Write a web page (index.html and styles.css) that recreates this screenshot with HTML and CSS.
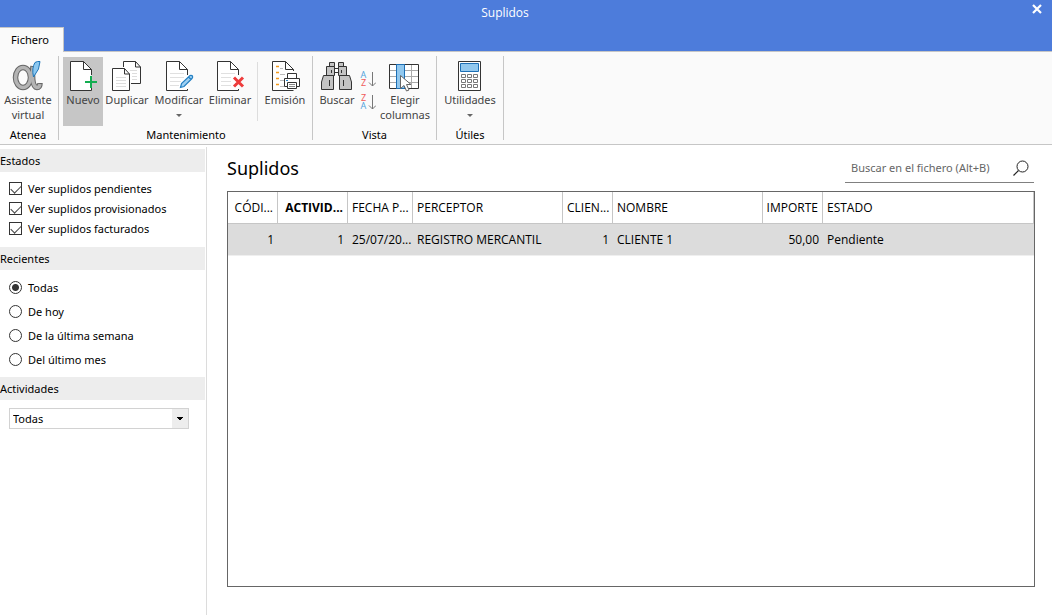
FILE: index.html
```html
<!DOCTYPE html>
<html lang="es">
<head>
<meta charset="utf-8">
<title>Suplidos</title>
<link rel="stylesheet" href="styles.css">
</head>
<body>
<div class="app">
  <header class="titlebar">
    <button class="tab" type="button">Fichero</button>
    <h1 class="window-title">Suplidos</h1>
    <button class="close" type="button" aria-label="Cerrar">
      <svg width="10" height="10" viewBox="0 0 10 10"><path d="M1 1L9 9M9 1L1 9" stroke="#fff" stroke-width="2.2"/></svg>
    </button>
  </header>

  <nav class="ribbon">
    <section class="group">
      <div class="tools">
        <button class="tool w56" type="button">
          <svg width="32" height="32" viewBox="0 0 32 32" fill="none">
            <g stroke="#666" stroke-width="5.500"><ellipse cx="11" cy="17.500" rx="7.500" ry="10"/><path d="M21 6C20 15 20 27 25 27.500Q28 27.500 28 23"/></g>
            <g stroke="#b4b4b4" stroke-width="3.500"><ellipse cx="11" cy="17.500" rx="7.500" ry="10"/><path d="M21 7C20 15 20 27 25 27.500Q27.500 27.500 28 24"/></g>
            <path d="M23 2.500Q25.500 1 28 1.500L26.500 9L21.500 17Q19.500 8 23 2.500Z" fill="#8cc8f0" stroke="#1d75b8"/>
          </svg>
          <span>Asistente<br>virtual</span>
        </button>
      </div>
      <div class="caption">Atenea</div>
    </section>

    <section class="group padded">
      <div class="tools">
        <button class="tool w40 active" type="button">
          <svg width="32" height="32" viewBox="0 0 32 32">
            <path d="M16.500 1.500H3.500V30.500H24.500V10L16.500 1.500Z" fill="#fff"/>
            <path d="M24.500 15V9.500L16.500 1.500H3.500V30.500H24.500V28M16.500 1.500V9.500H24.500" fill="none" stroke="#333"/>
            <path d="M24 16V28M18 22H30" stroke="#14ad51" stroke-width="2"/>
          </svg>
          <span>Nuevo</span>
        </button>
        <button class="tool w48" type="button">
          <svg width="32" height="32" viewBox="0 0 32 32">
            <path d="M12.500 7V1.500H24.500L29.500 7V23.500H20M24.500 1.500V7H29.500" fill="#fff" stroke="#333"/>
            <path d="M19 10.500H26M21 13.500H26M21 16.500H26M21 19.500H26" stroke="#ddd"/>
            <path d="M1.500 8.500H13.500L18.500 14V30.500H1.500ZM13.500 8.500V14H18.500" fill="#fff" stroke="#333"/>
            <path d="M5 17.500H15M5 20.500H15M5 23.500H15M5 26.500H15" stroke="#ddd"/>
          </svg>
          <span>Duplicar</span>
        </button>
        <button class="tool w56" type="button">
          <svg width="32" height="32" viewBox="0 0 32 32">
            <path d="M24.500 15V9.500L16.500 1.500H3.500V30.500H24.500V29M16.500 1.500V9.500H24.500" fill="#fff" stroke="#333"/>
            <path d="M7 13.500H21M7 17.500H21M7 21.500H18M7 25.500H16" stroke="#e0e0e0"/>
            <path d="M17.500 27.500L18.500 23.500L27 15.500Q28.500 15 29.500 16Q30 17.500 29 18.500L21 26.500ZM25.500 17L28 19.500" fill="#9fd0f2" stroke="#2580c3" stroke-width="1.200"/>
          </svg>
          <span>Modificar</span>
          <i class="arrow"></i>
        </button>
        <button class="tool w46" type="button">
          <svg width="32" height="32" viewBox="0 0 32 32">
            <path d="M24.500 15V9.500L16.500 1.500H3.500V30.500H24.500V29M16.500 1.500V9.500H24.500" fill="#fff" stroke="#333"/>
            <path d="M7 13.500H21M7 17.500H17M7 21.500H17M7 25.500H17" stroke="#e0e0e0"/>
            <path d="M20 17.500L29 26.500M29 17.500L20 26.500" stroke="#ee3c3c" stroke-width="3"/>
          </svg>
          <span>Eliminar</span>
        </button>
        <div class="divider"></div>
        <button class="tool w48" type="button">
          <svg width="32" height="32" viewBox="0 0 32 32">
            <path d="M24.500 11V9.500L16.500 1.500H3.500V30.500H24.500M16.500 1.500V9.500H24.500" fill="#fff" stroke="#333"/>
            <path d="M7 6.500H10M7 12.500H10M7 18.500H10M7 24.500H10" stroke="#f39a1e" stroke-width="1.500"/>
            <path d="M11 8.500H14M11 14.500H16M11 20.500H15M11 26.500H15" stroke="#bbb"/>
            <path d="M18.500 18V13.500H27.500V18M15.500 18.500H30.500V26.500H15.500Z" fill="#fff" stroke="#333"/>
            <path d="M18.500 22.500H27.500V28.500H18.500Z" fill="#fff" stroke="#333"/>
            <path d="M20 24.500H26M20 26.500H26" stroke="#888"/>
            <path d="M17 20.500H19" stroke="#2580c3"/>
          </svg>
          <span>Emisión</span>
        </button>
      </div>
      <div class="caption">Mantenimiento</div>
    </section>

    <section class="group vista">
      <div class="tools">
        <button class="tool w42" type="button">
          <svg width="32" height="32" viewBox="0 0 32 32">
            <g fill="#c4c4c4" stroke="#333">
              <path d="M8.500 2.500H13.500V6.500H8.500ZM17.500 2.500H22.500V6.500H17.500Z"/>
              <path d="M13.500 8.500H17.500V12.500H13.500Z" fill="#fff"/>
              <path d="M5.500 6.500H13.500V15.500H5.500ZM17.500 6.500H25.500V15.500H17.500Z"/>
              <path d="M2.500 15.500H12.500V29.500H.5V22ZM18.500 15.500H28.500L30.500 22V29.500H18.500Z"/>
              <path d="M10.500 10V13M20.500 10V13M8.500 20V26M22.500 20V26"/>
            </g>
          </svg>
          <span>Buscar</span>
        </button>
        <div class="sorts">
          <button class="sort" type="button" aria-label="Orden ascendente">
            <span class="letters"><b class="blue">A</b><b class="red">Z</b></span>
            <svg width="8" height="16" viewBox="0 0 8 16"><path d="M4.500 1V15M1 11.500L4.500 15L8 11.500" fill="none" stroke="#777"/></svg>
          </button>
          <button class="sort" type="button" aria-label="Orden descendente">
            <span class="letters"><b class="red">Z</b><b class="blue">A</b></span>
            <svg width="8" height="16" viewBox="0 0 8 16"><path d="M4.500 1V15M1 11.500L4.500 15L8 11.500" fill="none" stroke="#777"/></svg>
          </button>
        </div>
        <button class="tool w56" type="button">
          <svg width="32" height="32" viewBox="0 0 32 32">
            <path d="M.5 4.500H29.500V28.500H.5Z" fill="#fff"/>
            <path d="M1 10.500H29M1 16.500H29M1 22.500H29M22.500 5V28" stroke="#aaa"/>
            <path d="M.5 4.500H29.500V28.500H.5Z" fill="none" stroke="#333"/>
            <path d="M7.500 4.500H15.500V28.500H7.500Z" fill="#92c8ee" stroke="#1d6fb5"/>
            <path d="M11.500 15.500V28.500L15 25.500L17.500 31L20 30L17.500 24.500H22Z" fill="#fff" stroke="#666"/>
          </svg>
          <span>Elegir<br>columnas</span>
        </button>
      </div>
      <div class="caption">Vista</div>
    </section>

    <section class="group utiles">
      <div class="tools">
        <button class="tool w58" type="button">
          <svg width="32" height="32" viewBox="0 0 32 32">
            <path d="M4.500 1.500H26.500V30.500H4.500Z" fill="#fff" stroke="#333"/>
            <path d="M6.500 3.500H24.500V11.500H6.500Z" fill="#92c8ee" stroke="#1d6fb5"/>
            <path d="M7.500 14.500h4v3h-4zM13.500 14.500h4v3h-4zM19.500 14.500h4v3h-4zM7.500 19.500h4v3h-4zM13.500 19.500h4v3h-4zM19.500 19.500h4v3h-4zM7.500 24.500h4v3h-4zM13.500 24.500h4v3h-4zM19.500 24.500h4v3h-4z" fill="#fff" stroke="#777"/>
          </svg>
          <span>Utilidades</span>
          <i class="arrow"></i>
        </button>
      </div>
      <div class="caption">Útiles</div>
    </section>
  </nav>

  <div class="body">
    <aside class="sidebar">
      <h2 class="section">Estados</h2>
      <div class="checks">
        <label><input type="checkbox" checked>Ver suplidos pendientes</label>
        <label><input type="checkbox" checked>Ver suplidos provisionados</label>
        <label><input type="checkbox" checked>Ver suplidos facturados</label>
      </div>
      <h2 class="section">Recientes</h2>
      <div class="radios">
        <label><input type="radio" name="recientes" checked>Todas</label>
        <label><input type="radio" name="recientes">De hoy</label>
        <label><input type="radio" name="recientes">De la última semana</label>
        <label><input type="radio" name="recientes">Del último mes</label>
      </div>
      <h2 class="section">Actividades</h2>
      <div class="combo">
        <select aria-label="Actividades"><option>Todas</option></select>
      </div>
    </aside>

    <main class="main">
      <div class="heading">
        <h2 class="title">Suplidos</h2>
        <label class="search">
          <input type="text" placeholder="Buscar en el fichero (Alt+B)" aria-label="Buscar en el fichero">
          <svg width="16" height="16" viewBox="0 0 16 16" fill="none" stroke="#222"><circle cx="9.500" cy="6.500" r="5.500"/><path d="M5.500 10.500L.5 15.500" stroke-width="1.200"/></svg>
        </label>
      </div>
      <div class="grid">
        <table>
          <colgroup><col class="c50"><col class="c70"><col class="c65"><col class="c150"><col class="c50"><col class="c150"><col class="c60"><col></colgroup>
          <thead>
            <tr><th class="num">CÓDI...</th><th class="num sorted">ACTIVID...</th><th>FECHA P...</th><th>PERCEPTOR</th><th>CLIEN...</th><th>NOMBRE</th><th class="num">IMPORTE</th><th>ESTADO</th></tr>
          </thead>
          <tbody>
            <tr><td class="num">1</td><td class="num">1</td><td>25/07/20...</td><td>REGISTRO MERCANTIL</td><td class="num">1</td><td>CLIENTE 1</td><td class="num">50,00</td><td>Pendiente</td></tr>
          </tbody>
        </table>
      </div>
    </main>
  </div>
</div>
</body>
</html>
```
FILE: styles.css
```css
* { box-sizing: border-box; }
body, button, input, select { font-family: "Noto Sans", "Open Sans", sans-serif; font-size: 11px; }
body { margin: 0; color: #000; background: #fff; }
button { border: 0; padding: 0; background: none; color: inherit; }
h1, h2 { margin: 0; font-weight: 400; }
svg { display: block; }

.app { display: flex; flex-direction: column; min-height: 100vh; }

.titlebar { display: grid; grid-template-columns: 1fr auto 1fr; height: 52px; background: #4d7cdb; border-bottom: 1px solid #c6c6c6; }
.tab { align-self: end; justify-self: start; width: 64px; height: 25px; margin-bottom: -1px; padding: 0 3px 2px 0; background: #fafafa; border: 1px solid #c6c6c6; border-width: 1px 1px 0 0; }
.window-title { margin-left: -42px; padding-top: 5px; line-height: 16px; font-size: 12px; font-family: "Open Sans", sans-serif; color: #fff; }
.close { justify-self: end; align-self: start; padding: 4px 10px; }

.ribbon { display: flex; height: 93px; padding: 4px 0; background: #fafafa; border-bottom: 1px solid #c6c6c6; }
.group { display: flex; flex-direction: column; padding: 1px 2px 0 0; border-right: 1px solid #c6c6c6; }
.group.padded { padding: 1px 3px 0 4px; }
.group.vista { padding: 1px 3px 0; }
.group.utiles { padding: 1px 4px 0; }
.tools { display: flex; flex: none; height: 69px; }
.caption { line-height: 18px; text-align: center; }
.tool { display: flex; flex-direction: column; align-items: center; padding-top: 3px; line-height: 15px; color: #444; }
.tool span { white-space: nowrap; }
.tool.active { background: #c6c6c6; }
.w40 { width: 40px; }
.w42 { width: 42px; }
.w46 { width: 46px; }
.w48 { width: 48px; }
.w56 { width: 56px; }
.w58 { width: 58px; }
.arrow { margin-top: 7px; border: 3px solid transparent; border-top-color: #666; border-bottom: 0; }
.divider { width: 1px; margin: 5px 3px 5px 4px; background: #ddd; }
.sorts { display: flex; flex-direction: column; gap: 7px; padding: 14px 1px 0 2px; }
.sort { display: flex; gap: 1px; height: 16px; }
.letters { display: flex; flex-direction: column; width: 7px; }
.letters b { font-weight: 400; font-size: 9px; line-height: 8px; }
.blue { color: #55a4dc; }
.red { color: #f05a5a; }

.body { display: flex; flex: 1; }
.sidebar { width: 207px; flex: none; margin-top: 2px; padding-top: 2px; border-right: 1px solid #dcdcdc; }
.section { margin-right: 1px; font-size: 11px; line-height: 23px; background: #ededed; }
.checks { padding: 6px 9px 9px; }
.radios { padding: 5px 9px 6px; }
.checks label, .radios label { display: flex; align-items: center; gap: 6px; height: 20px; }
.radios label { height: 24px; }
.checks input, .radios input { appearance: none; width: 13px; height: 13px; margin: 0; border: 1px solid #333; background: #fff; }
.checks input:checked::after { content: ""; display: block; width: 9px; height: 5px; margin: 2px 0 0 1px; border: solid #444; border-width: 0 0 1px 1px; transform: rotate(-45deg); }
.radios input { border-radius: 50%; }
.radios input:checked { background: radial-gradient(circle, #333 3px, #fff 4px); }
.combo { padding: 8px 17px 0 9px; }
.combo select { appearance: none; display: block; width: 100%; height: 21px; padding: 0 3px; border: 1px solid #d2d2d2; border-radius: 0; color: #000;
  background: conic-gradient(from 315deg at 50% 100%, #000 90deg, transparent 0) no-repeat right 5px center / 6px 3px, linear-gradient(#ededed, #ededed) no-repeat right / 16px 100%, #fff; }

.main { flex: 1; display: flex; flex-direction: column; min-width: 0; padding: 8px 17px 28px 20px; }
.heading { display: flex; justify-content: space-between; height: 38px; }
.title { font-size: 18px; line-height: 31px; }
.search { display: flex; align-items: center; width: 189px; height: 30px; margin-right: 1px; padding: 0 5px 0 6px; border-bottom: 1px solid #808080; }
.search input { flex: 1; min-width: 0; padding: 0; border: 0; outline: 0; background: none; }
.search input::placeholder { color: #666; opacity: 1; }

.grid { flex: 1; border: 1px solid #666; }
table { width: 100%; table-layout: fixed; border-collapse: separate; border-spacing: 0; font-family: "Open Sans", sans-serif; font-size: 12px; }
.c50 { width: 50px; }
.c60 { width: 60px; }
.c65 { width: 65px; }
.c70 { width: 70px; }
.c150 { width: 150px; }
th, td { height: 32px; padding: 0 0 0 4px; overflow: hidden; text-align: left; white-space: nowrap; }
th { font-weight: 400; border: 1px solid #c6c6c6; border-width: 0 1px 1px 0; }
th.sorted { font-weight: 700; }
td { background: #dcdcdc; border-bottom: 1px solid #efefef; }
.num { padding: 0 4px 0 0; text-align: right; }
```
